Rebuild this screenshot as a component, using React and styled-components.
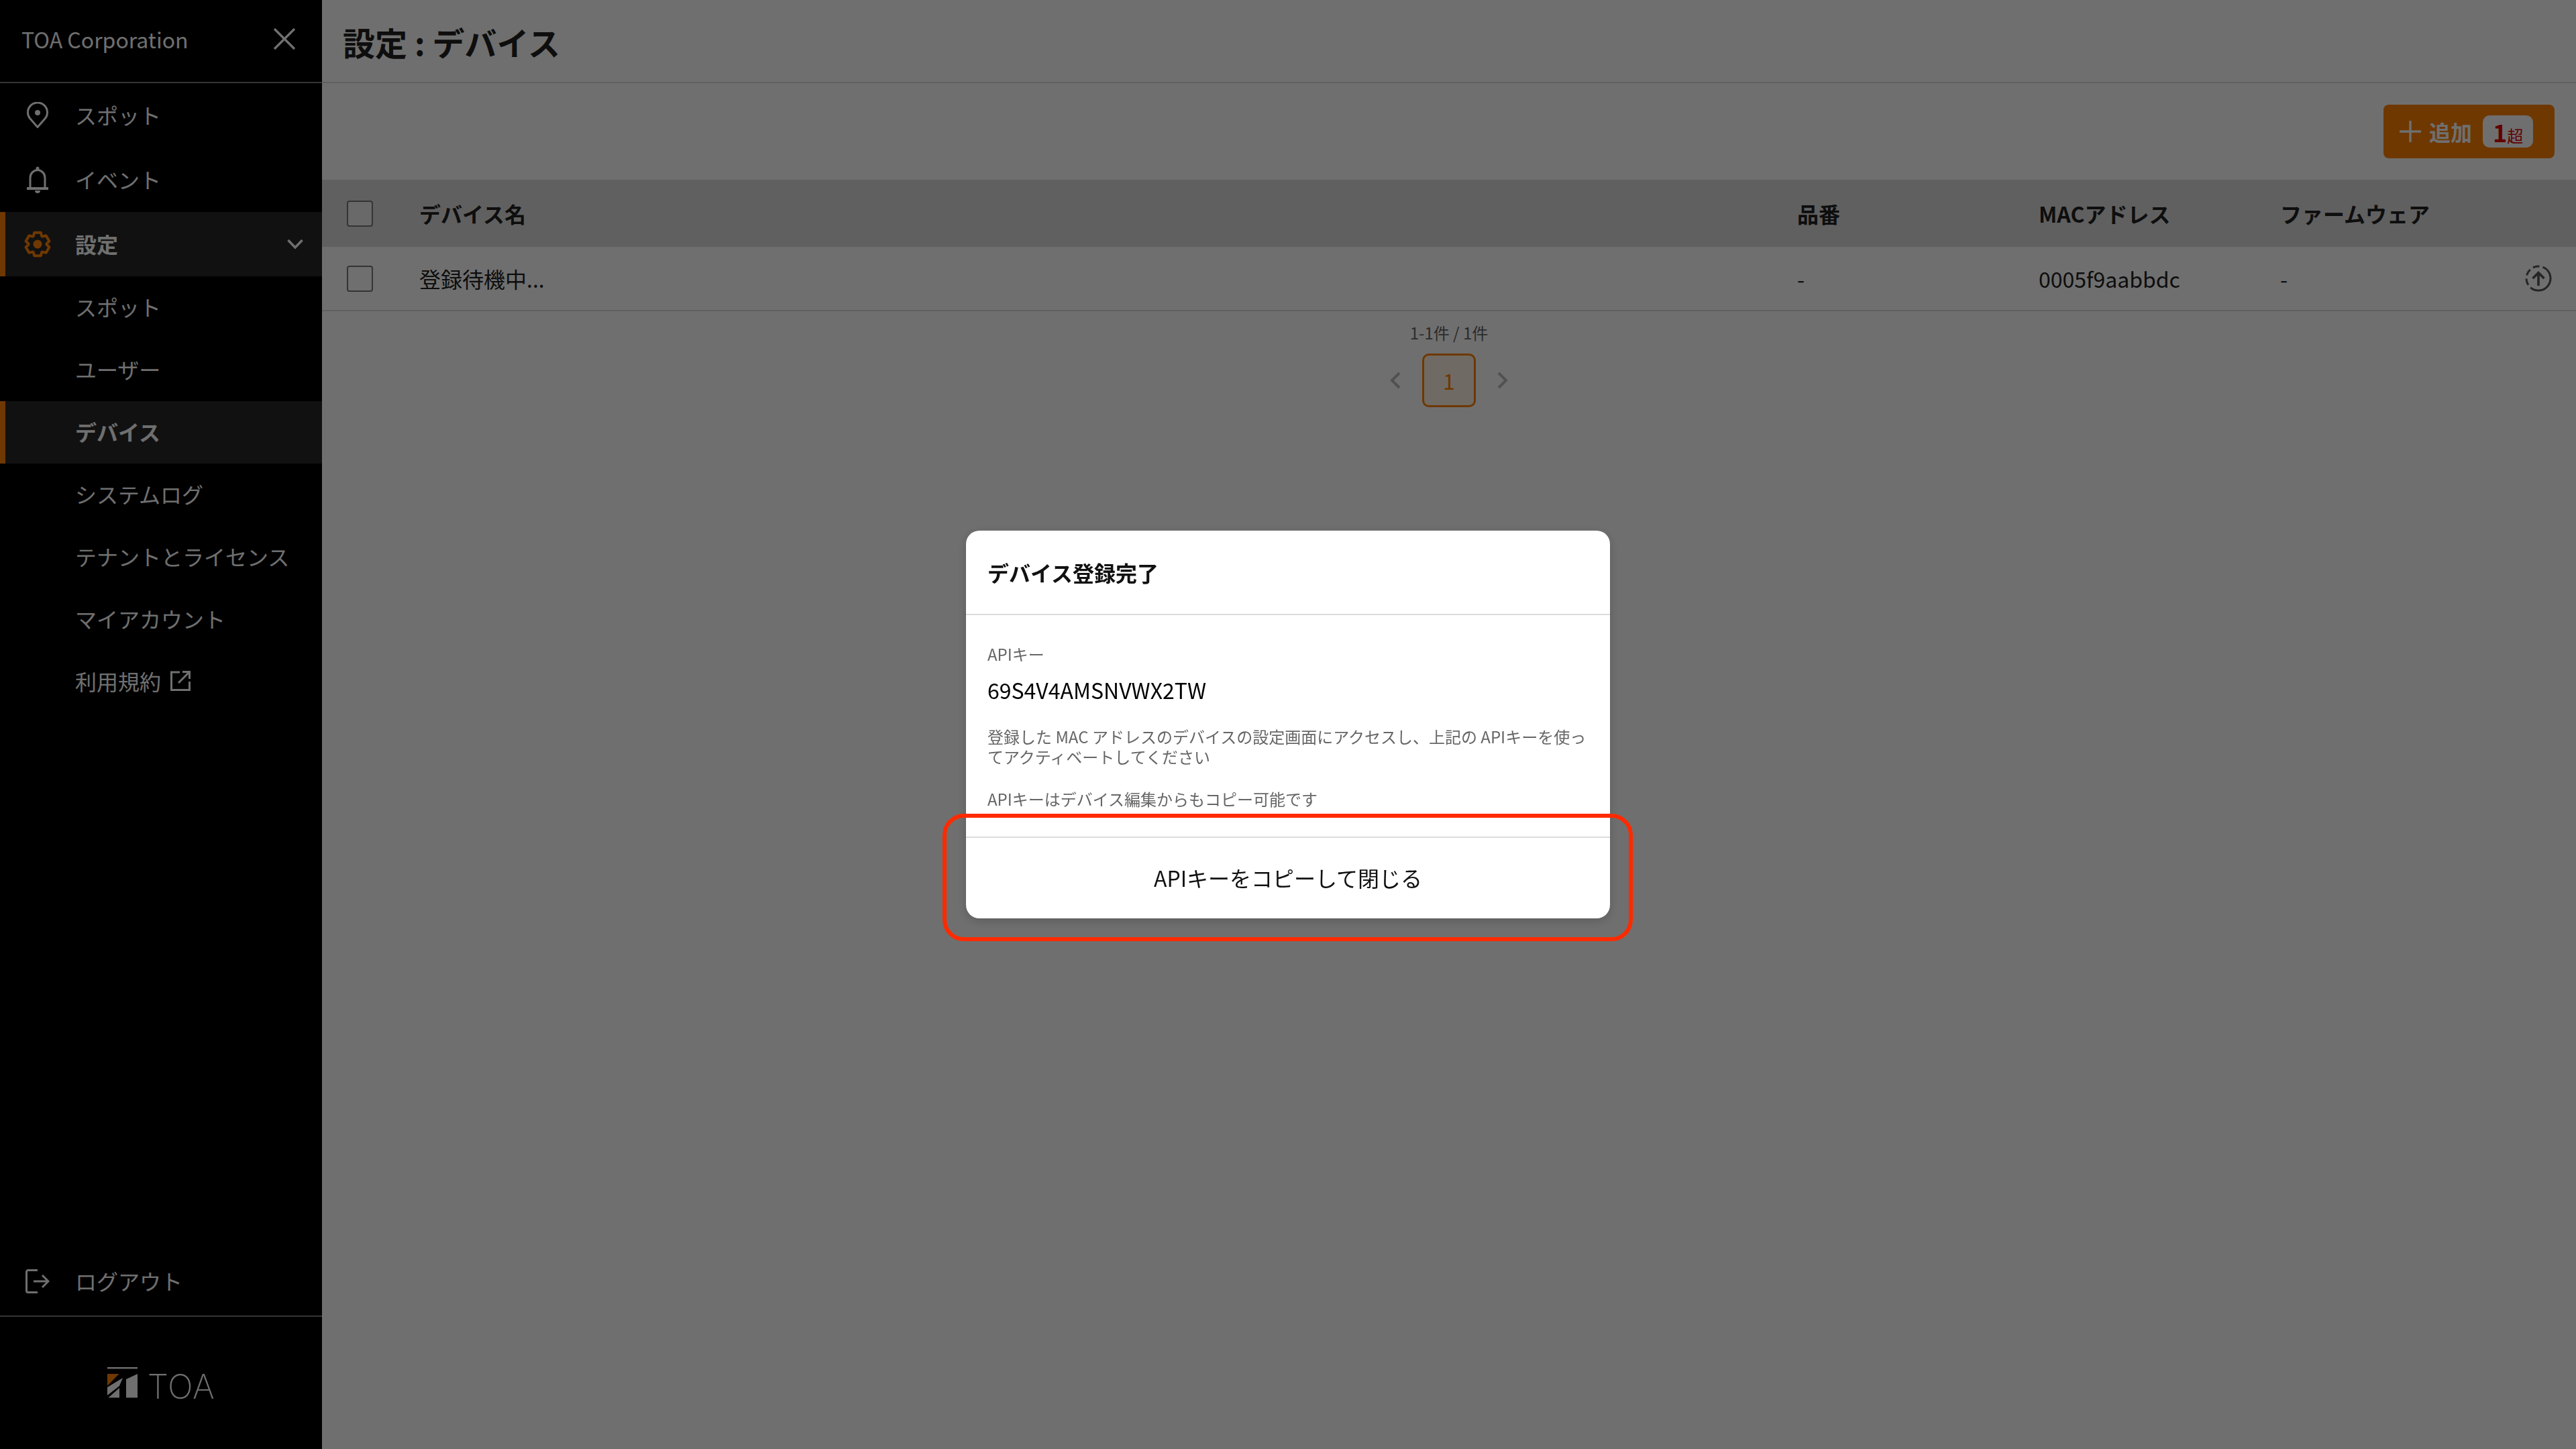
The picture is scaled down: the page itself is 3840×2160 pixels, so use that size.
import React from 'react';
import styled, { createGlobalStyle } from 'styled-components';

const GlobalStyle = createGlobalStyle`
  html, body { margin: 0; padding: 0; background: #fff; }
  body { font-family: "Noto Sans CJK JP", sans-serif; color: #222; }
  * { box-sizing: border-box; }
`;

const ACCENT = '#ff8100';

const Shell = styled.div`
  display: flex;
  width: 3840px;
  height: 2160px;
  overflow: hidden;
`;

const Sidebar = styled.aside`
  display: flex;
  flex-direction: column;
  width: 480px;
  flex: none;
  background: #000;
  color: #fff;
`;

const Brand = styled.div`
  display: flex;
  align-items: center;
  justify-content: space-between;
  height: 124px;
  padding: 0 40px 6px 32px;
  border-bottom: 2px solid #777;
  font-size: 32px;
`;

const Nav = styled.nav`
  display: flex;
  flex-direction: column;
  flex: 1;
`;

const NavItem = styled.div`
  display: flex;
  align-items: center;
  height: ${(p) => (p.$sub ? '93px' : '96px')};
  padding-left: ${(p) => (p.$sub ? '112px' : '0')};
  padding-right: 28px;
  padding-bottom: 3px;
  font-size: 32px;
  font-weight: ${(p) => (p.$active ? 700 : 400)};
  background: ${(p) => (p.$active ? '#292929' : 'transparent')};
  border-left: ${(p) => (p.$active ? `8px solid ${ACCENT}` : '0 solid transparent')};
  ${(p) => p.$active && p.$sub && 'padding-left: 104px;'}
`;

const LogoutItem = styled(NavItem)`
  margin-bottom: 3px;
`;

const IconSlot = styled.span`
  display: flex;
  align-items: center;
  justify-content: center;
  width: ${(p) => (p.$active ? '96px' : '112px')};
  margin-right: ${(p) => (p.$active ? '8px' : '0')};
  margin-bottom: -3px;
  flex: none;
`;

const Chevron = styled.svg`
  margin-left: auto;
  margin-bottom: -3px;
`;

const ExternalIcon = styled.svg`
  margin-left: 14px;
`;

const Spacer = styled.div`
  flex: 1;
`;

const LogoBar = styled.div`
  display: flex;
  align-items: center;
  justify-content: center;
  gap: 14px;
  height: 199px;
  border-top: 2px solid #777;
`;

const LogoWord = styled.span`
  margin-top: 10px;
  font-family: Inter, sans-serif;
  font-weight: 200;
  font-size: 50px;
  letter-spacing: 0.5px;
  line-height: 1;
  color: #fff;
`;

const Main = styled.main`
  flex: 1;
  display: flex;
  flex-direction: column;
  background: #fff;
`;

const PageHeader = styled.header`
  display: flex;
  align-items: center;
  height: 124px;
  padding: 0 0 0 31px;
  border-bottom: 2px solid #dcdcdc;
`;

const Title = styled.h1`
  margin: 0 0 -2px;
  font-size: 48px;
  font-weight: 700;
  color: #222;
`;

const Toolbar = styled.div`
  display: flex;
  justify-content: flex-end;
  align-items: center;
  height: 144px;
  padding-right: 32px;
`;

const AddButton = styled.button`
  display: flex;
  align-items: center;
  width: 255px;
  height: 80px;
  padding: 0 0 0 24px;
  border: 0;
  border-radius: 8px;
  background: ${ACCENT};
  color: #fff;
  font: 700 32px "Noto Sans CJK JP", sans-serif;
`;

const AddLabel = styled.span`
  margin-left: 12px;
`;

const Badge = styled.span`
  display: flex;
  align-items: baseline;
  justify-content: center;
  width: 75px;
  height: 48px;
  margin-left: 16px;
  border-radius: 10px;
  background: #fff;
  color: #e00000;
  font-size: 36px;
  line-height: 48px;
`;

const BadgeUnit = styled.span`
  font-size: 24px;
  font-weight: 400;
`;

const TableRow = styled.div`
  display: grid;
  grid-template-columns: 145px 2054px 360px 360px 1fr;
  align-items: center;
  height: ${(p) => (p.$head ? '100px' : '96px')};
  background: ${(p) => (p.$head ? '#dcdcdc' : 'transparent')};
  border-bottom: ${(p) => (p.$head ? '0' : '2px solid #dcdcdc')};
  font-size: 32px;
  font-weight: ${(p) => (p.$head ? 700 : 400)};
  color: #222;
`;

const CheckCell = styled.div`
  padding-left: 37px;
  display: flex;
`;

const Checkbox = styled.span`
  display: block;
  width: 39px;
  height: 39px;
  border: 2px solid #777;
  border-radius: 4px;
  background: ${(p) => (p.$head ? '#f0f0f0' : '#fff')};
`;

const ActionCell = styled.div`
  display: flex;
  align-items: center;
  justify-content: space-between;
  padding-right: 36px;
`;

const Pagination = styled.div`
  display: flex;
  flex-direction: column;
  align-items: center;
  gap: 12px;
  padding-top: 13px;
`;

const PageCount = styled.div`
  font-size: 24px;
  line-height: 38px;
  color: #666;
`;

const PageRow = styled.div`
  display: flex;
  align-items: center;
  gap: 27px;
`;

const PageButton = styled.div`
  display: flex;
  align-items: center;
  justify-content: center;
  width: 80px;
  height: 80px;
  border: 3px solid ${ACCENT};
  border-radius: 10px;
  background: #fff3e6;
  color: ${ACCENT};
  font-size: 32px;
`;

const Overlay = styled.div`
  position: fixed;
  inset: 0;
  display: flex;
  align-items: center;
  justify-content: center;
  background: rgba(0, 0, 0, 0.565);
`;

const Dialog = styled.section`
  position: relative;
  display: flex;
  flex-direction: column;
  width: 960px;
  height: 578px;
  border-radius: 20px;
  background: #fff;
  box-shadow: 0 4px 16px rgba(0, 0, 0, 0.18);
`;

const DialogTitle = styled.h2`
  display: flex;
  align-items: center;
  height: 126px;
  margin: 0;
  padding: 0 32px;
  border-bottom: 2px solid #dcdcdc;
  font-size: 32px;
  font-weight: 700;
  color: #111;
`;

const DialogBody = styled.div`
  flex: 1;
  padding: 40px 32px 0;
  border-bottom: 2px solid #dcdcdc;
`;

const KeyLabel = styled.div`
  font-size: 24px;
  line-height: 36px;
  color: #666;
`;

const KeyValue = styled.div`
  margin-top: 15px;
  font-size: 32px;
  line-height: 40px;
  color: #000;
`;

const Note = styled.p`
  margin: ${(p) => p.$gap}px 0 0;
  font-size: 24px;
  line-height: 30px;
  color: #666;
`;

const CopyButton = styled.button`
  flex: none;
  height: 120px;
  padding: 0 0 2px;
  border: 0;
  border-radius: 0 0 20px 20px;
  background: transparent;
  color: #111;
  font: 400 32px "Noto Sans CJK JP", sans-serif;
`;

const Callout = styled.div`
  position: absolute;
  left: -35px;
  right: -34px;
  top: 422px;
  bottom: -34px;
  border: 6px solid #ff2a00;
  border-radius: 32px;
  pointer-events: none;
`;

const PinIcon = () => (
  <svg width="32" height="40" viewBox="0 0 32 40" fill="none" stroke="currentColor" strokeWidth="3">
    <path d="M16 37.5 L5.5 25.5 A14.5 14.5 0 1 1 26.5 25.5 Z" strokeLinejoin="round" />
    <circle cx="16" cy="16" r="4" fill="currentColor" stroke="none" />
  </svg>
);

const BellIcon = () => (
  <svg width="32" height="40" viewBox="0 0 32 40" fill="none" stroke="currentColor" strokeWidth="3">
    <circle cx="16" cy="3" r="2.5" fill="currentColor" stroke="none" />
    <path d="M5 33 V17 a11 11.5 0 0 1 22 0 V33" />
    <path d="M0 33 H32" strokeWidth="4" />
    <path d="M12 36 h8 a4 4 0 0 1 -8 0 Z" fill="currentColor" stroke="none" />
  </svg>
);

// cog with six teeth, computed so the teeth stay evenly spaced
const gearPoints = () => {
  const pts = [];
  for (let i = 0; i < 6; i++) {
    const a = (i * Math.PI) / 3 - Math.PI / 2;
    const at = (r, d) => `${(20 + r * Math.cos(a + d)).toFixed(2)},${(20 + r * Math.sin(a + d)).toFixed(2)}`;
    pts.push(at(13.5, -0.48), at(18, -0.27), at(18, 0.27), at(13.5, 0.48));
  }
  return pts.join(' ');
};

const GearIcon = () => (
  <svg width="40" height="40" viewBox="0 0 40 40" fill="none" stroke={ACCENT} strokeWidth="4">
    <polygon points={gearPoints()} strokeLinejoin="round" />
    <circle cx="20" cy="20" r="6.5" fill={ACCENT} stroke="none" />
  </svg>
);

const LogoutIcon = () => (
  <svg width="36" height="36" viewBox="0 0 36 36" fill="none" stroke="currentColor" strokeWidth="3">
    <path d="M18 1.5 H4 a2.5 2.5 0 0 0 -2.5 2.5 V32 a2.5 2.5 0 0 0 2.5 2.5 H18" />
    <path d="M12 18 H34 M25 9 L34 18 L25 27" />
  </svg>
);

const CloseIcon = () => (
  <svg width="32" height="32" viewBox="0 0 32 32" stroke="currentColor" strokeWidth="3.4">
    <path d="M1 1 L31 31 M31 1 L1 31" />
  </svg>
);

const PlusIcon = () => (
  <svg width="32" height="32" viewBox="0 0 32 32" stroke="currentColor" strokeWidth="3.4">
    <path d="M16 0 V32 M0 16 H32" />
  </svg>
);

const UploadIcon = () => (
  <svg width="40" height="40" viewBox="0 0 40 40" fill="none" stroke="#555" strokeWidth="3">
    <circle cx="20" cy="20" r="18" strokeDasharray="44 5 10 5 10 5 10 5" transform="rotate(-10 20 20)" />
    <path d="M20 31 V12 M11.5 20 L20 11.5 L28.5 20" strokeWidth="3.6" />
  </svg>
);

const LogoMark = () => (
  <svg width="46" height="47" viewBox="0 0 46 47">
    <rect x="0" y="0" width="45" height="2.4" fill="#fff" />
    <polygon points="0,10 17.5,10 0,28" fill={ACCENT} />
    <polygon points="0,30 23,16 18,28 0,42" fill="#fff" />
    <polygon points="1.5,45.5 18,31 18,45.5" fill="#fff" />
    <polygon points="28,18 45,10 45,45.5 28,45.5" fill="#fff" />
  </svg>
);

const devices = [{ name: '登録待機中...', part: '-', mac: '0005f9aabbdc', firmware: '-' }];

const subItems = ['スポット', 'ユーザー', 'デバイス', 'システムログ', 'テナントとライセンス', 'マイアカウント'];

const App = () => {
  return (
    <>
      <GlobalStyle />
      <Shell>
        <Sidebar>
          <Brand>
            <span>TOA Corporation</span>
            <CloseIcon />
          </Brand>
          <Nav>
            <NavItem><IconSlot><PinIcon /></IconSlot>スポット</NavItem>
            <NavItem><IconSlot><BellIcon /></IconSlot>イベント</NavItem>
            <NavItem $active>
              <IconSlot $active><GearIcon /></IconSlot>設定
              <Chevron width="24" height="16" viewBox="0 0 24 16" fill="none" stroke="currentColor" strokeWidth="3.6">
                <path d="M1.5 2 L12 13 L22.5 2" />
              </Chevron>
            </NavItem>
            {subItems.map((label) => (
              <NavItem key={label} $sub $active={label === 'デバイス'}>{label}</NavItem>
            ))}
            <NavItem $sub>
              利用規約
              <ExternalIcon width="30" height="30" viewBox="0 0 30 30" fill="none" stroke="currentColor" strokeWidth="3">
                <path d="M14 2 H1.5 V28.5 H28.5 V16 M12 18 L28 2 M18 1.5 H28.5 V12" />
              </ExternalIcon>
            </NavItem>
            <Spacer />
            <LogoutItem><IconSlot><LogoutIcon /></IconSlot>ログアウト</LogoutItem>
          </Nav>
          <LogoBar>
            <LogoMark />
            <LogoWord>TOA</LogoWord>
          </LogoBar>
        </Sidebar>
        <Main>
          <PageHeader>
            <Title>設定 : デバイス</Title>
          </PageHeader>
          <Toolbar>
            <AddButton>
              <PlusIcon />
              <AddLabel>追加</AddLabel>
              <Badge>1<BadgeUnit>超</BadgeUnit></Badge>
            </AddButton>
          </Toolbar>
          <TableRow $head>
            <CheckCell><Checkbox $head /></CheckCell>
            <div>デバイス名</div>
            <div>品番</div>
            <div>MACアドレス</div>
            <div>ファームウェア</div>
          </TableRow>
          {devices.map((d) => (
            <TableRow key={d.mac}>
              <CheckCell><Checkbox /></CheckCell>
              <div>{d.name}</div>
              <div>{d.part}</div>
              <div>{d.mac}</div>
              <ActionCell>
                <span>{d.firmware}</span>
                <UploadIcon />
              </ActionCell>
            </TableRow>
          ))}
          <Pagination>
            <PageCount>1-1件 / 1件</PageCount>
            <PageRow>
              <svg width="24" height="28" viewBox="0 0 24 28" fill="none" stroke="#bbb" strokeWidth="4">
                <path d="M17 3 L6 14 L17 25" />
              </svg>
              <PageButton>1</PageButton>
              <svg width="24" height="28" viewBox="0 0 24 28" fill="none" stroke="#bbb" strokeWidth="4">
                <path d="M7 3 L18 14 L7 25" />
              </svg>
            </PageRow>
          </Pagination>
        </Main>
      </Shell>
      <Overlay>
        <Dialog>
          <DialogTitle>デバイス登録完了</DialogTitle>
          <DialogBody>
            <KeyLabel>APIキー</KeyLabel>
            <KeyValue>69S4V4AMSNVWX2TW</KeyValue>
            <Note $gap={35}>登録した MAC アドレスのデバイスの設定画面にアクセスし、上記の APIキーを使ってアクティベートしてください</Note>
            <Note $gap={33}>APIキーはデバイス編集からもコピー可能です</Note>
          </DialogBody>
          <CopyButton>APIキーをコピーして閉じる</CopyButton>
          <Callout />
        </Dialog>
      </Overlay>
    </>
  );
};

export default App;
